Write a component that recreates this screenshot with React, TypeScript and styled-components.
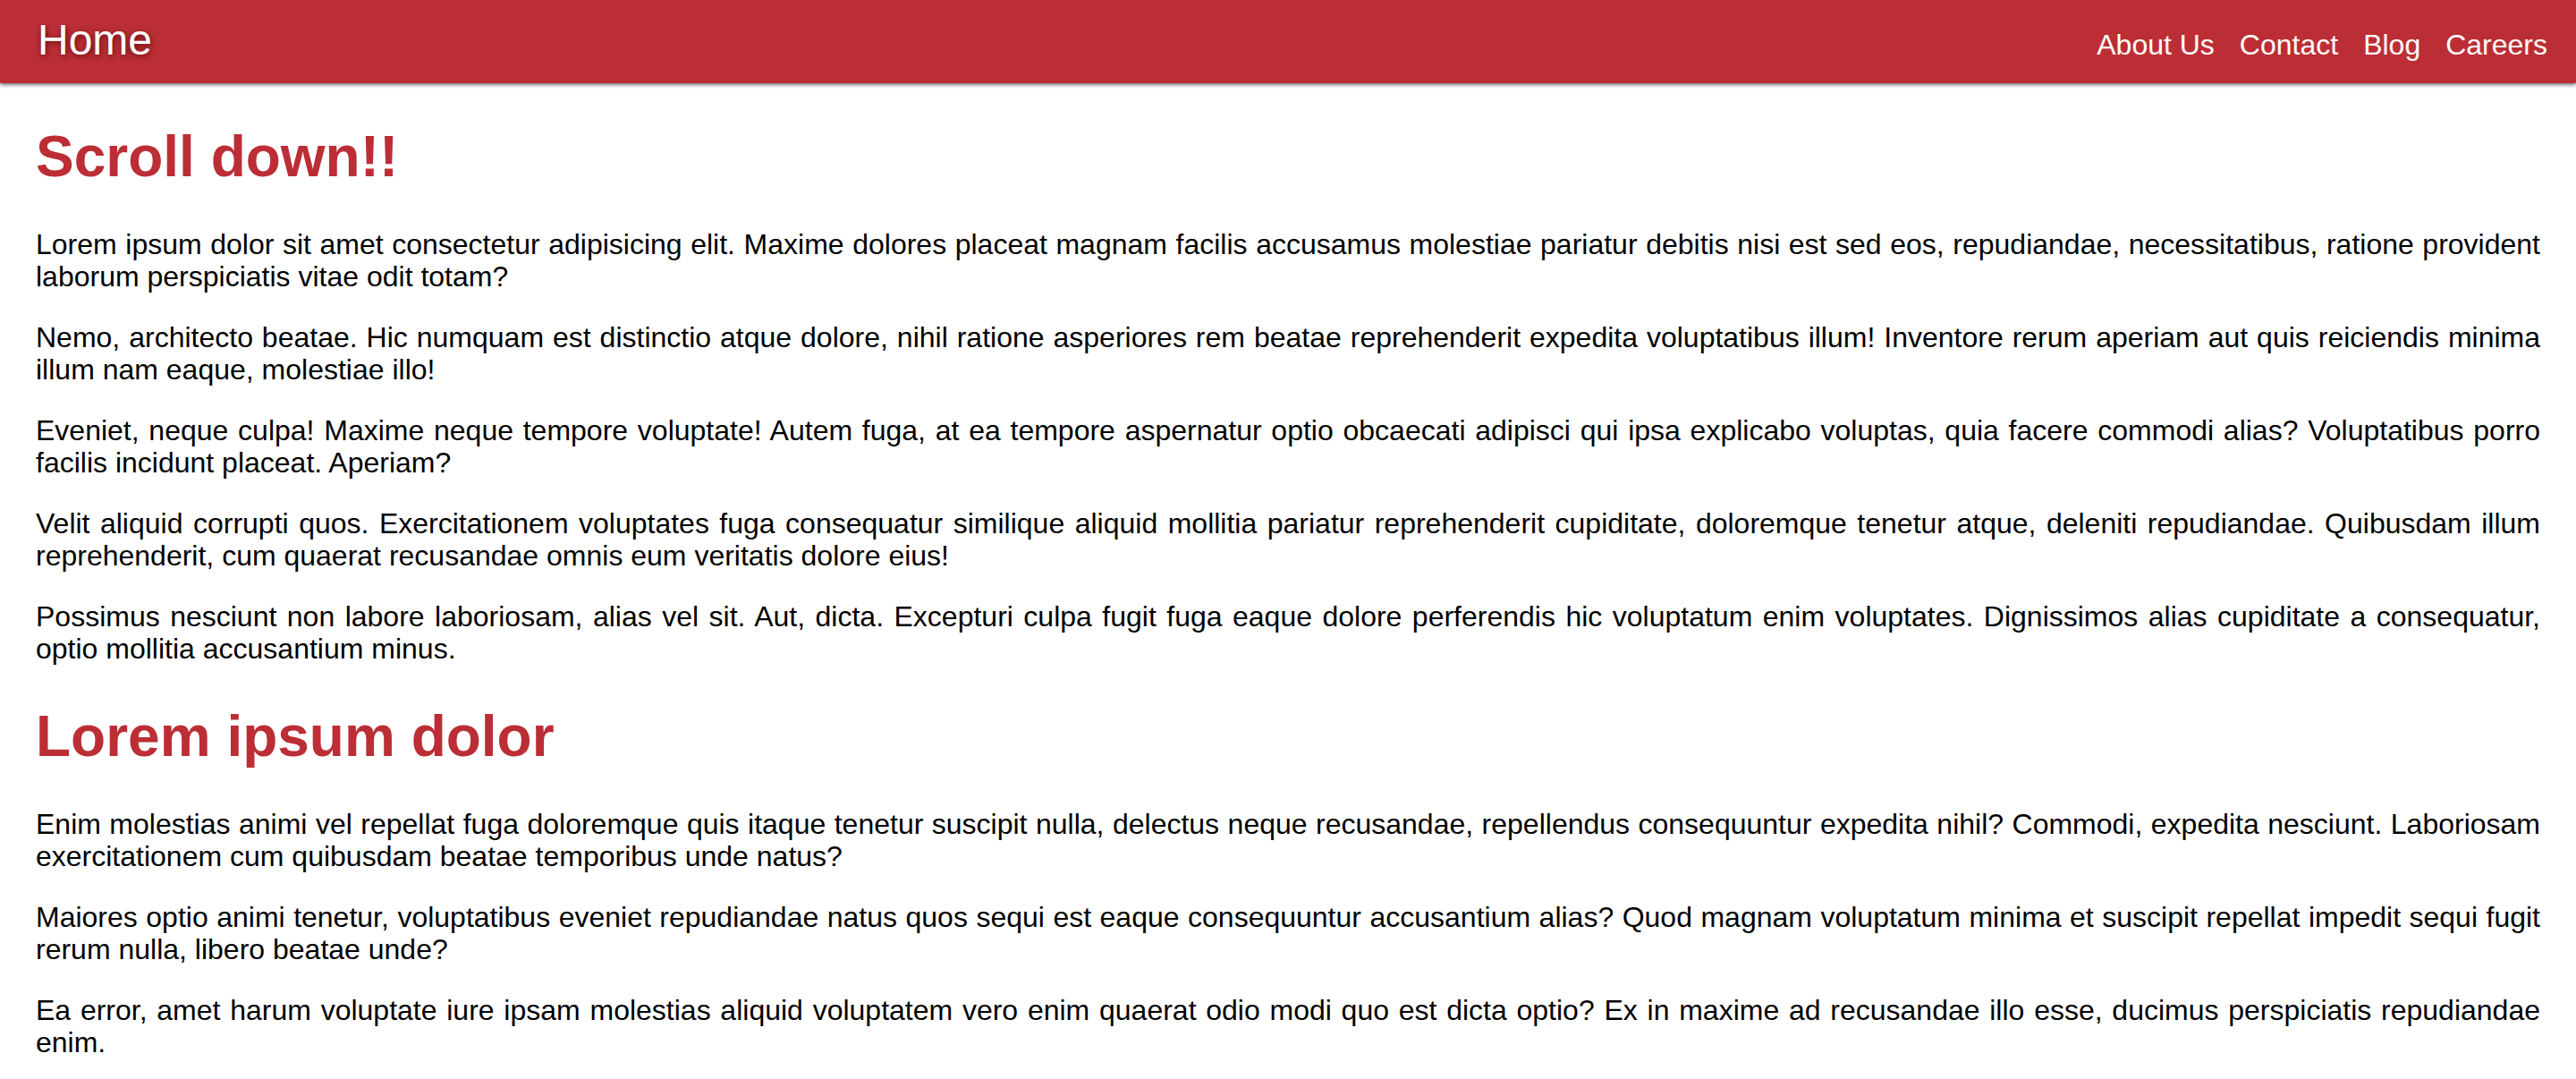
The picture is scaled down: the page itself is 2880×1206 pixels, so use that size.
import React from 'react';
import styled, { createGlobalStyle } from 'styled-components';

const brand = '#bc2e35';

const GlobalStyle = createGlobalStyle`
  html {
    scrollbar-width: none;
  }
  html::-webkit-scrollbar {
    display: none;
  }
  body {
    margin: 0;
    background: #fff;
    color: #000;
    font-family: 'Liberation Sans', Arial, sans-serif;
  }
`;

const Navbar = styled.header`
  height: 93px;
  background: ${brand};
  box-shadow: 0 2px 4px rgba(0, 0, 0, 0.55);
  display: flex;
  align-items: center;
  justify-content: space-between;
  padding: 0 0 0 42px;
  position: relative;
  z-index: 1;
`;

const Brand = styled.a`
  color: #fff;
  font-size: 48px;
  line-height: 1;
  text-decoration: none;
  text-shadow: 1px 2px 6px rgba(60, 0, 0, 0.75);
  margin-top: -4px;
`;

const Links = styled.nav`
  display: flex;
  align-items: center;
  padding-right: 18px;
  margin-top: 6px;
`;

const NavLink = styled.a`
  color: #fff;
  font-size: 32px;
  line-height: 1;
  padding: 0 14px;
  text-decoration: none;
`;

const Main = styled.main`
  padding: 2px 40px 0;
`;

const Heading = styled.h1`
  color: ${brand};
  font-size: 64px;
  line-height: 74px;
  font-weight: bold;
  margin: 43px 0;
`;

const Paragraph = styled.p`
  font-size: 32px;
  line-height: 36px;
  text-align: justify;
  margin: 32px 0;
`;

const sections = [
  {
    title: 'Scroll down!!',
    paragraphs: [
      'Lorem ipsum dolor sit amet consectetur adipisicing elit. Maxime dolores placeat magnam facilis accusamus molestiae pariatur debitis nisi est sed eos, repudiandae, necessitatibus, ratione provident laborum perspiciatis vitae odit totam?',
      'Nemo, architecto beatae. Hic numquam est distinctio atque dolore, nihil ratione asperiores rem beatae reprehenderit expedita voluptatibus illum! Inventore rerum aperiam aut quis reiciendis minima illum nam eaque, molestiae illo!',
      'Eveniet, neque culpa! Maxime neque tempore voluptate! Autem fuga, at ea tempore aspernatur optio obcaecati adipisci qui ipsa explicabo voluptas, quia facere commodi alias? Voluptatibus porro facilis incidunt placeat. Aperiam?',
      'Velit aliquid corrupti quos. Exercitationem voluptates fuga consequatur similique aliquid mollitia pariatur reprehenderit cupiditate, doloremque tenetur atque, deleniti repudiandae. Quibusdam illum reprehenderit, cum quaerat recusandae omnis eum veritatis dolore eius!',
      'Possimus nesciunt non labore laboriosam, alias vel sit. Aut, dicta. Excepturi culpa fugit fuga eaque dolore perferendis hic voluptatum enim voluptates. Dignissimos alias cupiditate a consequatur, optio mollitia accusantium minus.',
    ],
  },
  {
    title: 'Lorem ipsum dolor',
    paragraphs: [
      'Enim molestias animi vel repellat fuga doloremque quis itaque tenetur suscipit nulla, delectus neque recusandae, repellendus consequuntur expedita nihil? Commodi, expedita nesciunt. Laboriosam exercitationem cum quibusdam beatae temporibus unde natus?',
      'Maiores optio animi tenetur, voluptatibus eveniet repudiandae natus quos sequi est eaque consequuntur accusantium alias? Quod magnam voluptatum minima et suscipit repellat impedit sequi fugit rerum nulla, libero beatae unde?',
      'Ea error, amet harum voluptate iure ipsam molestias aliquid voluptatem vero enim quaerat odio modi quo est dicta optio? Ex in maxime ad recusandae illo esse, ducimus perspiciatis repudiandae enim.',
    ],
  },
];

const links = ['About Us', 'Contact', 'Blog', 'Careers'];

function App() {
  return (
    <>
      <GlobalStyle />
      <Navbar>
        <Brand href="#">Home</Brand>
        <Links>
          {links.map(link => (
            <NavLink key={link} href="#">
              {link}
            </NavLink>
          ))}
        </Links>
      </Navbar>
      <Main>
        {sections.map(section => (
          <section key={section.title}>
            <Heading>{section.title}</Heading>
            {section.paragraphs.map((text, i) => (
              <Paragraph key={i}>{text}</Paragraph>
            ))}
          </section>
        ))}
      </Main>
    </>
  );
}

export default App;
